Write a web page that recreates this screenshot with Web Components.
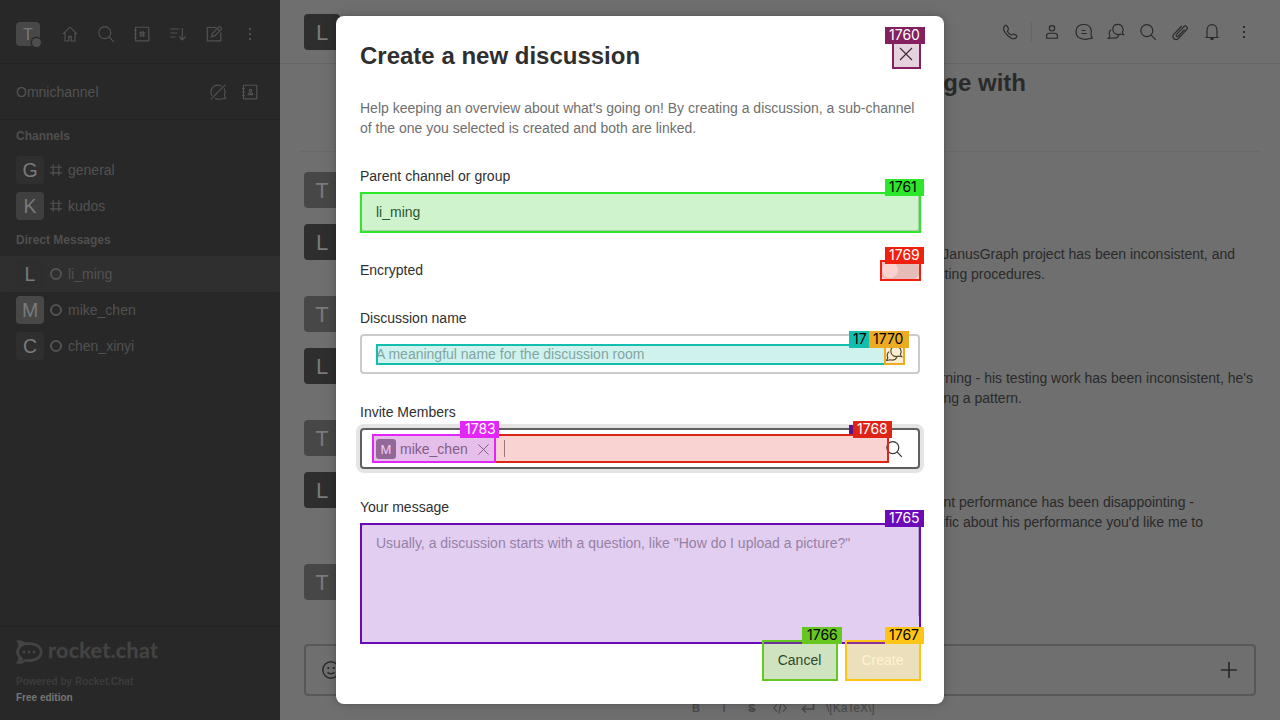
<!DOCTYPE html>
<html lang="en">
<head>
<meta charset="utf-8">
<title>Create a new discussion</title>
<style>
html,body{margin:0;height:100%;overflow:hidden}
body{font-family:"Liberation Sans",Arial,sans-serif;font-size:14px;line-height:20px;background:#6f6f6f}
</style>
</head>
<body>
<chat-app></chat-app>
<script>
const ICONS = {
  home:'<path d="M2.8 10.2 10 3.2l7.2 7M5 8.6V17h3.8v-4.6h2.4V17H15V8.6"/>',
  search:'<circle cx="8.8" cy="8.6" r="6"/><path d="m13.2 13.2 4.6 4.6"/>',
  directory:'<rect x="3.500" y="3.200" width="13.300" height="13.600" rx=".6"/><path d="M2 6.500h2.800M2 10h2.800M2 13.500h2.800M9 7v6M11.400 7v6M7.200 8.800h6M7.200 11.200h6"/>',
  contacts:'<rect x="3.500" y="3.200" width="13.300" height="13.600" rx=".6"/><path d="M2 6.500h2.800M2 10h2.800M2 13.500h2.800"/><circle cx="10.500" cy="8.600" r="1.200"/><path d="M8.200 12.600c0-2.300 4.600-2.300 4.600 0z"/>',
  sort:'<path d="M2.5 5h9M2.5 9h7M2.5 13h5M14.3 4v11.5M11 12.5l3.3 3.4 3.3-3.4"/>',
  edit:'<path d="M12.5 3.5H3.3v13.3h13.5V8.5"/><path d="m7.5 12.8.8-3.3 6.5-6.6c1-1 3.4 1.3 2.4 2.5l-6.5 6.5zM13.3 4.6l2.3 2.3"/>',
  kebab:'<g fill="currentColor" stroke="none"><rect x="9" y="4" width="2" height="2"/><rect x="9" y="9" width="2" height="2"/><rect x="9" y="14" width="2" height="2"/></g>',
  nochat:'<path d="M13.600 4C8.500 1.500 3 4.500 3 10c0 1.500.4 2.800 1.200 4M16.200 6.500c1 2 1.100 4.200.3 6.300-.2 1.200.4 2.200 1.200 3.700-1.500 0-2.500-.1-3.500.2-2.600.8-5.200.7-7.400-.3M2.800 17.300 17.300 2.700"/>',
  hash:'<path d="M7.200 4.200v11.600M12.800 4.200v11.600M4.200 7.200h11.600M4.200 12.800h11.600"/>',
  circle:'<circle cx="10" cy="10" r="5" stroke-width="2"/>',
  phone:'<path d="M4 4.800c1.200-1.800 2.400-1.800 3.200-.6l1.200 2.200c.5 1-.8 1.700-.9 2.600 0 1.300 2.600 3.600 3.800 3.800.9.100 1.500-1.100 2.400-.8l2.500 1.300c1.200.7.5 2.100-.7 2.900C11.500 18.800 1.800 9.500 4 4.800z"/>',
  user:'<circle cx="10" cy="6.300" r="2.700"/><path d="M4.600 16.200v-2.400c0-1.700 1.400-2.600 3-2.600h4.800c1.600 0 3 .9 3 2.600v2.400z" stroke-linejoin="round"/>',
  thread:'<path d="M17 12.300c-.1 1 .3 2 1.300 3.800-2-.1-2.700.3-4 .8-5 1.200-12.300-.4-12.300-7S7 2.400 10.500 2.500C16.500 2.800 18.300 8 17 12.300zM7.500 8.500h4M7.500 11.500h5.300"/>',
  discussion:'<path d="M16.400 10.300c.1.800.5 1.400 1.300 2.300-1.300 0-2.100-.3-2.900-.5-4 1.400-8-.8-8-4.800 0-3.500 2.500-5 5-5 4.600 0 6.400 4.800 4.600 8z"/><path d="M5 7.700c-1.600 1.500-2.200 3.800-1.200 6-.2 1.300-.7 2-1.400 2.800 1.600.1 2.600-.3 3.500-.7 3 .9 5.500.2 7-2.500"/>',
  clip:'<path d="m15.200 7.200-6.100 6.600c-1.400 1.500-3.200-.3-1.900-1.700l7-7.500c2.200-2.200 5 .6 3 2.900l-8 8.600c-3.200 3.300-7.500-.6-4.600-4.100l7.700-8.200" transform="translate(-.6 .2)"/>',
  bell:'<path d="M3.500 15.500h13M5 15.300V8.500C5 5 7.200 2.600 10 2.600s5 2.400 5 5.900v6.800"/><path d="M8.500 17h3" stroke-width="2"/>',
  cross:'<path d="m4 4 12 12M16 4 4 16"/>',
  plus:'<path d="M10 2v16M2 10h16" stroke-width="1.700"/>',
  smile:'<circle cx="10" cy="10" r="8.200" stroke-width="1.500"/><path d="M6.500 12.300c1.500 2 5.500 2 7 0" stroke-width="1.500"/><path d="M7.300 7v2M12.700 7v2" stroke-width="1.800"/>',
  code:'<path d="M7 6 3.800 9.800 7 13.600M13 6l3.200 3.800L13 13.600M11.300 4.500l-2.600 11"/>',
  enter:'<path d="M15.500 5.500v5.500H4.500M8 7.500 4.500 11 8 14.500" stroke-width="1.600"/>',
  rocket:'<path fill="currentColor" stroke="none" fill-rule="evenodd" d="M0 .5C4.500-.5 7.500.8 9.300 2.500 18 1 26.500 4.500 26.500 12S18 23 9.300 21.500C7.500 23.500 4 24.500 0 23.500 2.200 21 2.500 19 2 17-.6 14-.6 10 2 7 2.500 5 2 2.500 0 .5zM9 5.300C5 6.500 3 9 3 12s2.500 5 4.500 6.300c-.3 1-.8 1.800-1.500 2.300 1.500-.2 2.500-.8 3.300-1.600C17 20 23.800 17.500 23.800 12S16.500 4 9 5.300z"/><g fill="currentColor" stroke="none"><circle cx="8" cy="12" r="1.500"/><circle cx="13" cy="12" r="1.500"/><circle cx="18" cy="12" r="1.500"/></g>'
};

function define(name, render) {
  customElements.define(name, class extends HTMLElement {
    connectedCallback() {
      if (this.shadowRoot) return;
      this.attachShadow({mode:'open'}).innerHTML = render(this);
    }
  });
}
const attr = (el, n, d='') => el.getAttribute(n) ?? d;

define('ui-icon', el => {
  const s = attr(el,'size','20'), n = attr(el,'name');
  const logo = n === 'rocket';
  return `<style>:host{display:block;flex:none}svg{display:block}</style>
  <svg width="${logo?27:s}" height="${logo?24:s}" viewBox="0 0 ${logo?'27 24':'20 20'}" fill="none" stroke="currentColor" stroke-width="1.15">${ICONS[n]}</svg>`;
});

define('user-avatar', el => {
  const s = attr(el,'size','36');
  return `<style>:host{display:flex;flex:none;align-items:center;justify-content:center;box-sizing:border-box;padding-top:2px;
    width:${s}px;height:${s}px;border-radius:${s>20?4:3}px;background:${attr(el,'bg')};color:${attr(el,'fg','#7a7a7a')};font-size:${attr(el,'font','22')}px;line-height:1}</style><slot></slot>`;
});

define('room-row', el => `<style>
  :host{display:flex;align-items:center;height:36px;padding:0 16px;box-sizing:border-box;color:#525252;border-radius:2px}
  :host([selected]){background:#2f2f2f}
  ui-icon{margin:0 2px}
  </style><user-avatar size="28" font="19.5" bg="${attr(el,'bg')}">${attr(el,'letter')}</user-avatar><ui-icon name="${attr(el,'icon')}"></ui-icon><slot></slot>`);

define('side-heading', () => `<style>:host{display:flex;align-items:center;height:32px;padding:0 16px;font-size:12px;font-weight:700;color:#4f4f4f}</style><slot></slot>`);

define('side-bar', () => `<style>
  :host{display:flex;flex-direction:column;width:280px;height:720px;background:#282828;color:#525252;flex:none}
  .tools{display:flex;align-items:center;height:64px;box-sizing:border-box;padding:5px 20px 0 16px;border-bottom:1px solid #232323;gap:16px}
  .me{position:relative;margin-right:4px}
  .me i{position:absolute;right:-1px;bottom:-1px;width:9px;height:9px;border-radius:50%;background:#4d4d4d;box-shadow:0 0 0 1.500px #2a2a2a}
  .omni{display:flex;align-items:center;height:56px;box-sizing:border-box;padding:1px 20px 0 16px;border-bottom:1px solid #232323;gap:12px}
  .omni span{flex:1}
  .foot{margin-top:auto;height:94px;box-sizing:border-box;border-top:1px solid #232323;padding:13px 16px 0;font-size:10px;font-weight:700;line-height:16px;color:#3c3c3c}
  .logo{display:flex;height:24px;margin-bottom:10px;color:#434343;gap:5px}
  .logo svg{overflow:visible}
  .free{color:#767676}
  </style>
  <div class="tools"><div class="me"><user-avatar size="24" font="16" bg="#484848">T</user-avatar><i></i></div>
  <ui-icon name="home"></ui-icon><ui-icon name="search"></ui-icon><ui-icon name="directory"></ui-icon><ui-icon name="sort"></ui-icon><ui-icon name="edit"></ui-icon><ui-icon name="kebab"></ui-icon></div>
  <div class="omni"><span>Omnichannel</span><ui-icon name="nochat"></ui-icon><ui-icon name="contacts"></ui-icon></div>
  <side-heading>Channels</side-heading>
  <room-row letter="G" bg="#2f2f2f" icon="hash">general</room-row>
  <room-row letter="K" bg="#3f3f3f" icon="hash">kudos</room-row>
  <side-heading>Direct Messages</side-heading>
  <room-row selected letter="L" bg="#2e2e2e" icon="circle">li_ming</room-row>
  <room-row letter="M" bg="#484848" icon="circle">mike_chen</room-row>
  <room-row letter="C" bg="#2f2f2f" icon="circle">chen_xinyi</room-row>
  <div class="foot"><div class="logo"><ui-icon name="rocket"></ui-icon>
   <svg width="125" height="24"><text x="0" y="18" font-family="Lato" font-weight="700" font-size="21.500" textLength="110" fill="currentColor" stroke="currentColor" stroke-width=".3">rocket.chat</text></svg></div>
   <div>Powered by Rocket.Chat</div><div class="free">Free edition</div></div>`);

define('chat-message', el => `<style>
  :host{display:flex;height:${attr(el,'height')}px;padding:0 24px;box-sizing:border-box;color:#2a2a2a}
  div{flex:1;padding-top:20px}
  </style><user-avatar bg="${attr(el,'from')==='T'?'#474747':'#2e2e2e'}">${attr(el,'from')}</user-avatar><div><slot></slot></div>`);

define('text-line', el => `<style>:host{display:block;text-align:right;white-space:nowrap;margin-right:${1256-attr(el,'end')}px}</style><slot></slot>`);

define('chat-room', () => `<style>
  :host{display:flex;flex-direction:column;width:1000px;height:720px;background:#6f6f6f;color:#2a2a2a}
  header{display:flex;align-items:center;height:64px;box-sizing:border-box;border-bottom:1px solid #656565;padding:1px 26px 0 24px;gap:12px}
  header user-avatar{margin-right:auto}
  .sep{width:1px;height:20px;background:#656565;margin:0 -2px 0 -1px}
  h1{margin:0 20px;height:88px;box-sizing:border-box;border-bottom:1px solid #686868;padding-top:3px;font-size:24px;line-height:32px}
  .list{padding-top:20px;height:471px;box-sizing:border-box}
  .composer{display:flex;align-items:center;justify-content:space-between;box-sizing:border-box;height:52px;margin:21px 24px 0;border:2px solid #585858;border-radius:4px;padding:0 15px}
  .fmt{display:flex;align-items:center;height:24px;padding-left:406px;color:#494949;gap:8px}
  .fmt ui-icon,.fmt b,.fmt s{width:20px;text-align:center}
  .fmt{font-size:12px}.fmt b{font-size:11px}
  </style>
  <header><user-avatar bg="#2e2e2e">L</user-avatar><ui-icon name="phone"></ui-icon><div class="sep"></div><ui-icon name="user"></ui-icon><ui-icon name="thread"></ui-icon><ui-icon name="discussion"></ui-icon><ui-icon name="search"></ui-icon><ui-icon name="clip"></ui-icon><ui-icon name="bell"></ui-icon><ui-icon name="kebab"></ui-icon></header>
  <h1><text-line end="1022">ge with</text-line></h1>
  <div class="list">
   <chat-message from="T" height="52"></chat-message>
   <chat-message from="L" height="72"><text-line end="1235">JanusGraph project has been inconsistent, and</text-line><text-line end="1045">sting procedures.</text-line></chat-message>
   <chat-message from="T" height="52"></chat-message>
   <chat-message from="L" height="72"><text-line end="1253">rning - his testing work has been inconsistent, he's</text-line><text-line end="1022">ng a pattern.</text-line></chat-message>
   <chat-message from="T" height="52"></chat-message>
   <chat-message from="L" height="92"><text-line end="1194">nt performance has been disappointing -</text-line><text-line end="1203">ific about his performance you'd like me to</text-line></chat-message>
   <chat-message from="T" height="52"></chat-message>
  </div>
  <div class="composer"><ui-icon name="smile"></ui-icon><ui-icon name="plus"></ui-icon></div>
  <div class="fmt"><b>B</b><b>i</b><s><b>S</b></s><ui-icon name="code"></ui-icon><ui-icon name="enter"></ui-icon><span>\\[KaTeX\\]</span></div>`);

define('form-field', el => `<style>:host{display:block}label{display:block;height:20px;margin-bottom:6px;color:#2f2f2f}</style>
  <label>${attr(el,'label')}</label><slot></slot>`);

define('text-box', () => `<style>
  :host{display:flex;align-items:center;justify-content:space-between;box-sizing:border-box;height:40px;border:2px solid #cbcbcb;border-radius:4px;padding:0 14px;background:#fff;color:#2f2f2f}
  :host([disabled]){background:#f7f7f7}
  :host([placeholder]){color:#9f9f9f}
  :host([tall]){height:120px;align-items:flex-start;padding-top:8px}
  :host([focused]){height:41px;border-color:#5f5f5f;box-shadow:0 0 0 4px #e4e4e4;padding-left:10px}
  ::slotted(ui-icon){color:#2f2f2f}
  </style><slot></slot>`);

define('member-chip', () => `<style>
  :host{display:flex;align-items:center;height:28px;width:123px;box-sizing:border-box;padding:0 3px 0 4px;background:#e6e6e6;color:#6c6c6c;gap:4px;border-radius:3px}
  span{flex:1}ui-icon{margin-top:1px}
  </style><user-avatar size="20" font="13" bg="#7f7a80" fg="#f4f4f4">M</user-avatar><span><slot></slot></span><ui-icon name="cross" size="17"></ui-icon>`);

define('toggle-switch', () => `<style>:host{display:flex;align-items:center;width:40px;height:20px;box-sizing:border-box;padding:2px;border-radius:10px;background:#e4e4e4}i{width:16px;height:16px;border-radius:50%;background:#fff}</style><i></i>`);

define('push-button', () => `<style>:host{display:flex;align-items:center;justify-content:center;width:75px;height:40px;border-radius:4px;background:#eaeaea;color:#262626}
  :host([disabled]){background:#e6e6e6;color:#fff}</style><slot></slot>`);

define('discussion-dialog', () => `<style>
  :host{display:flex;flex-direction:column;box-sizing:border-box;width:608px;height:688px;padding:24px;border-radius:8px;background:#fff;box-shadow:0 0 2px rgba(0,0,0,.12),0 0 12px rgba(0,0,0,.22)}
  header{display:flex;justify-content:space-between;height:58px;color:#2f2f2f}
  h2{margin:0;font-size:24px;line-height:32px}
  header ui-icon{margin:4px 4px 0}
  .body{height:518px;margin:0 -8px;padding:0 8px;overflow:hidden}
  p{margin:0 0 28px;color:#6f6f6f}
  .toggle{display:flex;justify-content:space-between;margin:28px 0;color:#2f2f2f}
  .name{margin-bottom:28px}.invite{margin-bottom:28px}
  .entry{display:flex;align-items:center}
  .caret{width:1px;height:17px;background:#8c8c8c;margin-left:9px}
  footer{display:flex;justify-content:flex-end;gap:8px;padding-top:24px}
  </style>
  <header><h2>Create a new discussion</h2><ui-icon name="cross"></ui-icon></header>
  <div class="body"><p>Help keeping an overview about what's going on! By creating a discussion, a sub-channel of the one you selected is created and both are linked.</p>
  <form-field label="Parent channel or group"><text-box disabled>li_ming</text-box></form-field>
  <div class="toggle"><span>Encrypted</span><toggle-switch></toggle-switch></div>
  <form-field class="name" label="Discussion name"><text-box placeholder>A meaningful name for the discussion room<ui-icon name="discussion"></ui-icon></text-box></form-field>
  <form-field class="invite" label="Invite Members"><text-box focused><div class="entry"><member-chip>mike_chen</member-chip><div class="caret"></div></div><ui-icon name="search"></ui-icon></text-box></form-field>
  <form-field label="Your message"><text-box placeholder tall>Usually, a discussion starts with a question, like "How do I upload a picture?"</text-box></form-field></div>
  <footer><push-button>Cancel</push-button><push-button disabled>Create</push-button></footer>`);

/* Outlined region with a numbered tag; box="x y w h", tag="x y w" */
define('region-mark', el => {
  const [x,y,w,h] = attr(el,'box').split(' ');
  const [tx,ty,tw] = attr(el,'tag').split(' ');
  const c = attr(el,'color');
  return `<style>:host{position:absolute;left:${x}px;top:${y}px;width:${w}px;height:${h}px;box-sizing:border-box;border:2px solid ${c}}
  i{position:absolute;inset:0;background:${c};opacity:.2}
  b{position:absolute;left:${tx-x-2}px;top:${ty-y-2}px;width:${tw}px;height:17px;box-sizing:border-box;padding-left:${attr(el,'inset','4')}px;background:${c};color:${attr(el,'ink','#fff')};font:400 14px/15px Inter,sans-serif;white-space:nowrap}</style><i></i><b><slot></slot></b>`;
});

define('chat-app', () => `<style>
  :host{display:flex;position:relative;width:1280px;height:720px;overflow:hidden}
  discussion-dialog{position:absolute;left:336px;top:16px}
  .tab{position:absolute;left:849px;top:425px;width:5px;height:9px;background:#5f1290}
  </style>
  <side-bar></side-bar><chat-room></chat-room><discussion-dialog></discussion-dialog>
  <div class="tab"></div>
  <region-mark box="892 40 29 29" tag="885 27 40" color="#84205e">1760</region-mark>
  <region-mark box="360 192 561 41" tag="885 179 39" color="#2de82a" ink="#000">1761</region-mark>
  <region-mark box="376 344 510 21" tag="849 331 40" color="#12bfae" ink="#000">17</region-mark>
  <region-mark box="360 523 561 121" tag="885 510 39" color="#6d0ab8">1765</region-mark>
  <region-mark box="762 640 76 41" tag="802 627 40" inset="5" color="#66c720" ink="#000">1766</region-mark>
  <region-mark box="845 640 76 41" tag="885 627 39" color="#ffc516" ink="#000">1767</region-mark>
  <region-mark box="494 434 395 29" tag="853 421 39" color="#dd2417">1768</region-mark>
  <region-mark box="880 260 41 21" tag="885 247 39" color="#f01f0e">1769</region-mark>
  <region-mark box="884 344 21 21" tag="869 331 40" color="#ebab23" ink="#000">1770</region-mark>
  <region-mark box="372 434 124 29" tag="460 421 39" inset="5" color="#e325f8">1783</region-mark>`);
</script>
</body>
</html>
